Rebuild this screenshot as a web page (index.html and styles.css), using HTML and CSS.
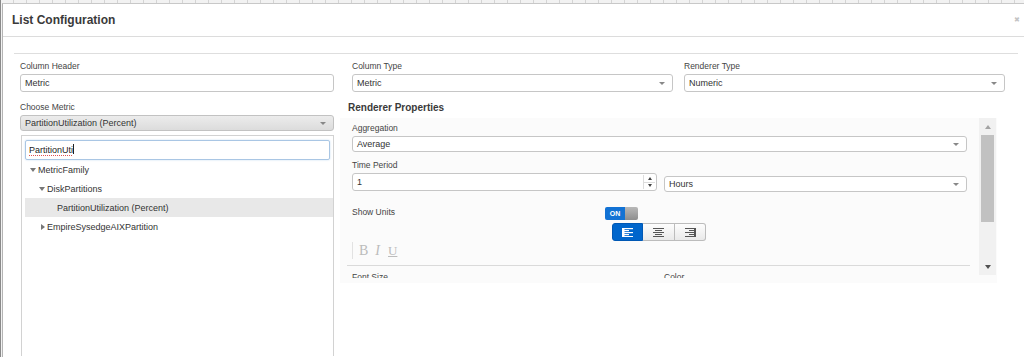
FILE: index.html
```html
<!DOCTYPE html>
<html lang="en">
<head>
    <meta charset="UTF-8">
    <title>List Configuration</title>
    <link rel="stylesheet" href="styles.css">
</head>
<body>
    <div class="modal">
        <div class="modal-header">
            <span class="modal-title">List Configuration</span>
            <span class="close">&#x2716;</span>
        </div>

        <div class="modal-body">
            <div class="config">
                <div class="row-top">
                    <div class="field col-header">
                        <div class="label">Column Header</div>
                        <div class="input">Metric</div>
                    </div>
                    <div class="field col-type">
                        <div class="label">Column Type</div>
                        <div class="select">Metric</div>
                    </div>
                    <div class="field col-renderer">
                        <div class="label">Renderer Type</div>
                        <div class="select">Numeric</div>
                    </div>
                </div>

                <div class="row-main">
                    <div class="left-col">
                        <div class="label">Choose Metric</div>
                        <div class="select select-metric">PartitionUtilization (Percent)</div>
                        <div class="tree">
                            <div class="search"><span class="typo">PartitionUti</span><span class="caret-cursor"></span></div>
                            <div class="tree-row level-0"><span class="tri-down"></span>MetricFamily</div>
                            <div class="tree-row level-1"><span class="tri-down"></span>DiskPartitions</div>
                            <div class="tree-row level-2 selected">PartitionUtilization (Percent)</div>
                            <div class="tree-row level-1b"><span class="tri-right"></span>EmpireSysedgeAIXPartition</div>
                        </div>
                    </div>

                    <div class="right-col">
                        <div class="section-title">Renderer Properties</div>
                        <div class="props">
                            <div class="props-content">
                                <div class="label">Aggregation</div>
                                <div class="select wide small">Average</div>

                                <div class="label gap">Time Period</div>
                                <div class="time-row">
                                    <div class="input number">1
                                        <span class="spinner">
                                            <span class="spin-up"></span>
                                            <span class="spin-down"></span>
                                        </span>
                                    </div>
                                    <div class="select small hours">Hours</div>
                                </div>

                                <div class="units-row">
                                    <div class="label units-label">Show Units</div>
                                    <div class="toggle">
                                        <span class="toggle-on">ON</span>
                                        <span class="toggle-knob"></span>
                                    </div>
                                </div>

                                <div class="align-group">
                                    <span class="align-btn active">
                                        <svg width="11" height="9" viewBox="0 0 11 9"><rect x="0" y="0" width="11" height="1.2"/><rect x="0" y="2" width="7" height="1.2"/><rect x="0" y="4" width="11" height="1.2"/><rect x="0" y="6" width="7" height="1.2"/><rect x="0" y="8" width="11" height="1.2"/><rect x="0" y="0" width="2.5" height="9"/></svg>
                                    </span>
                                    <span class="align-btn">
                                        <svg width="11" height="9" viewBox="0 0 11 9"><rect x="0" y="0" width="11" height="1"/><rect x="2" y="2" width="7" height="1"/><rect x="0" y="4" width="11" height="1"/><rect x="2" y="6" width="7" height="1"/><rect x="0" y="8" width="11" height="1"/></svg>
                                    </span>
                                    <span class="align-btn">
                                        <svg width="11" height="9" viewBox="0 0 11 9"><rect x="0" y="0" width="11" height="1"/><rect x="4" y="2" width="7" height="1"/><rect x="0" y="4" width="11" height="1"/><rect x="4" y="6" width="7" height="1"/><rect x="0" y="8" width="11" height="1"/><rect x="9" y="0" width="2" height="9"/></svg>
                                    </span>
                                </div>

                                <div class="toolbar">
                                    <span class="tb-b">B</span>
                                    <span class="tb-i">I</span>
                                    <span class="tb-u">U</span>
                                </div>

                                <div class="divider"></div>

                                <div class="font-row">
                                    <span class="label font-label">Font Size</span>
                                    <span class="label">Color</span>
                                </div>
                            </div>

                            <div class="scrollbar">
                                <div class="sb-btn"><span class="sb-up"></span></div>
                                <div class="sb-thumb"></div>
                                <div class="sb-space"></div>
                                <div class="sb-btn"><span class="sb-down"></span></div>
                            </div>
                        </div>
                    </div>
                </div>
            </div>
        </div>
    </div>
</body>
</html>
```

FILE: styles.css
```css
body {
    margin: 0;
    height: 357px;
    overflow: hidden;
    font-family: "Liberation Sans", Arial, sans-serif;
    background: linear-gradient(90deg, #8a8a8a 0 1px, transparent 1px),
                repeating-linear-gradient(90deg, #d4d4d4 0 1px, #f2f2f2 1px 13px);
}

.modal {
    margin: 3px 0 0 2px;
    height: 353px;
    overflow: hidden;
    background: #fff;
    border-top: 1px solid #c8c8c8;
    border-left: 1px solid #b4b4b4;
}

.modal-header {
    display: flex;
    justify-content: space-between;
    align-items: center;
    height: 32px;
    padding: 0 4px 0 9px;
    border-bottom: 1px solid #dcdcdc;
}

.modal-title {
    font-size: 12px;
    font-weight: bold;
    color: #3a3a3a;
}

.close {
    font-size: 7px;
    color: #c4c4c4;
}

.modal-body {
    padding: 0 6px 0 11px;
}

.config {
    margin-top: 16px;
    border-top: 1px solid #dedede;
    padding: 5px 0 0 6px;
}

.label {
    font-size: 8.5px;
    line-height: 14px;
    color: #444;
    margin-bottom: 1px;
}

.input, .select {
    box-sizing: border-box;
    height: 18px;
    border: 1px solid #c6c6c6;
    border-radius: 3px;
    padding: 0 4px;
    font-size: 9px;
    line-height: 16px;
    color: #333;
    background: #fff;
    position: relative;
}

.select::after {
    content: "";
    position: absolute;
    right: 7px;
    top: 50%;
    margin-top: -1px;
    border-left: 3px solid transparent;
    border-right: 3px solid transparent;
    border-top: 3px solid #888;
}

.select.small {
    height: 16px;
    line-height: 14px;
}

.row-top {
    display: flex;
}

.col-header {
    width: 314px;
}

.col-type {
    width: 321px;
    margin-left: 18px;
}

.col-renderer {
    width: 321px;
    margin-left: 11px;
}

.row-main {
    display: flex;
    margin-top: 8px;
}

.left-col {
    width: 314px;
}

.select-metric {
    height: 16px;
    line-height: 14px;
    margin-top: 1px;
    background: linear-gradient(#ececec, #dcdcdc);
    border-color: #c2c2c2;
}

.tree {
    box-sizing: border-box;
    width: 313px;
    height: 221px;
    margin: 4px 0 0 1px;
    padding: 4px 0 0 3px;
    border: 1px solid #d2d2d2;
    border-bottom: none;
}

.search {
    box-sizing: border-box;
    width: 305px;
    height: 20px;
    border: 1px solid #a9c6e4;
    border-radius: 2px;
    box-shadow: 0 0 2px rgba(102, 160, 220, 0.4);
    padding-left: 3px;
    font-size: 9px;
    line-height: 18px;
    color: #222;
}

.typo {
    text-decoration: underline dotted #e05050;
    text-underline-offset: 2px;
}

.caret-cursor {
    display: inline-block;
    width: 1px;
    height: 10px;
    background: #222;
    vertical-align: -1px;
}

.tree-row {
    display: flex;
    align-items: center;
    height: 19px;
    font-size: 9px;
    color: #333;
}

.tree-row.selected {
    background: #e8e8e8;
}

.level-0 { padding-left: 5px; }
.level-1 { padding-left: 14px; }
.level-1b { padding-left: 16px; }
.level-2 { padding-left: 32px; }

.tri-down {
    border-left: 3px solid transparent;
    border-right: 3px solid transparent;
    border-top: 4px solid #777;
    margin-right: 2px;
}

.tri-right {
    border-top: 3px solid transparent;
    border-bottom: 3px solid transparent;
    border-left: 4px solid #777;
    margin-right: 2px;
}

.right-col {
    width: 657px;
    margin-left: 6px;
}

.section-title {
    font-size: 10px;
    font-weight: bold;
    line-height: 14px;
    margin: 1px 0 0 8px;
    color: #3a3a3a;
}

.props {
    display: flex;
    height: 165px;
    margin-top: 3px;
    background: #fbfbfb;
}

.props-content {
    flex: 1;
    height: 157px;
    overflow: hidden;
    padding: 3px 0 0 12px;
}

.select.wide {
    width: 615px;
}

.gap {
    margin-top: 6px;
}

.time-row {
    display: flex;
    align-items: flex-start;
}

.number {
    width: 305px;
}

.spinner {
    position: absolute;
    right: 1px;
    top: 1px;
    bottom: 1px;
    width: 11px;
    display: flex;
    flex-direction: column;
    border-left: 1px solid #ddd;
}

.spin-up, .spin-down {
    flex: 1;
    display: flex;
    align-items: center;
    justify-content: center;
}

.spin-up {
    border-bottom: 1px solid #ddd;
}

.spin-up::after {
    content: "";
    border-left: 2.5px solid transparent;
    border-right: 2.5px solid transparent;
    border-bottom: 3px solid #444;
}

.spin-down::after {
    content: "";
    border-left: 2.5px solid transparent;
    border-right: 2.5px solid transparent;
    border-top: 3px solid #444;
}

.hours {
    width: 303px;
    margin: 3px 0 0 7px;
}

.units-row {
    display: flex;
    margin-top: 13px;
}

.units-label {
    width: 253px;
    margin: 0;
}

.toggle {
    display: flex;
    width: 33px;
    height: 13px;
    margin-top: 2px;
    border-radius: 2px;
    overflow: hidden;
}

.toggle-on {
    width: 20px;
    background: #1272d4;
    color: #fff;
    font-size: 7px;
    font-weight: bold;
    line-height: 13px;
    text-align: center;
}

.toggle-knob {
    flex: 1;
    background: linear-gradient(#b8b8b8, #8e8e8e);
}

.align-group {
    display: flex;
    margin: 3px 0 0 260px;
}

.align-btn {
    box-sizing: border-box;
    width: 32px;
    height: 18px;
    display: flex;
    align-items: center;
    justify-content: center;
    border: 1px solid #bcbcbc;
    border-left: none;
    background: linear-gradient(#fdfdfd, #e9e9e9);
    fill: #555;
}

.align-btn:first-child {
    width: 31px;
    border: 1px solid #0058b4;
    border-radius: 3px 0 0 3px;
}

.align-btn:last-child {
    width: 31px;
    border-radius: 0 3px 3px 0;
}

.align-btn.active {
    background: #0066cc;
    fill: #fff;
}

.toolbar {
    display: flex;
    align-items: center;
    height: 17px;
    margin-top: 1px;
    padding-left: 6px;
    border-left: 1px solid #e2e2e2;
    font-family: "Liberation Serif", "Times New Roman", serif;
    font-size: 14px;
    color: #bcbcbc;
}

.tb-i {
    font-style: italic;
    margin-left: 7px;
}

.tb-u {
    text-decoration: underline;
    margin-left: 8px;
    font-size: 13px;
}

.divider {
    width: 623px;
    margin: 6px 0 0 -5px;
    border-top: 1px solid #dadada;
}

.font-row {
    display: flex;
    margin-top: 4px;
}

.font-label {
    width: 312px;
}

.scrollbar {
    display: flex;
    flex-direction: column;
    width: 17px;
    height: 157px;
    margin-right: 1px;
    background: #f1f1f1;
}

.sb-btn {
    height: 17px;
    display: flex;
    align-items: center;
    justify-content: center;
}

.sb-up {
    border-left: 3.5px solid transparent;
    border-right: 3.5px solid transparent;
    border-bottom: 4px solid #a3a3a3;
}

.sb-down {
    border-left: 3.5px solid transparent;
    border-right: 3.5px solid transparent;
    border-top: 4px solid #505050;
}

.sb-thumb {
    height: 87px;
    margin: 0 2px;
    background: #c1c1c1;
}

.sb-space {
    flex: 1;
}
```
